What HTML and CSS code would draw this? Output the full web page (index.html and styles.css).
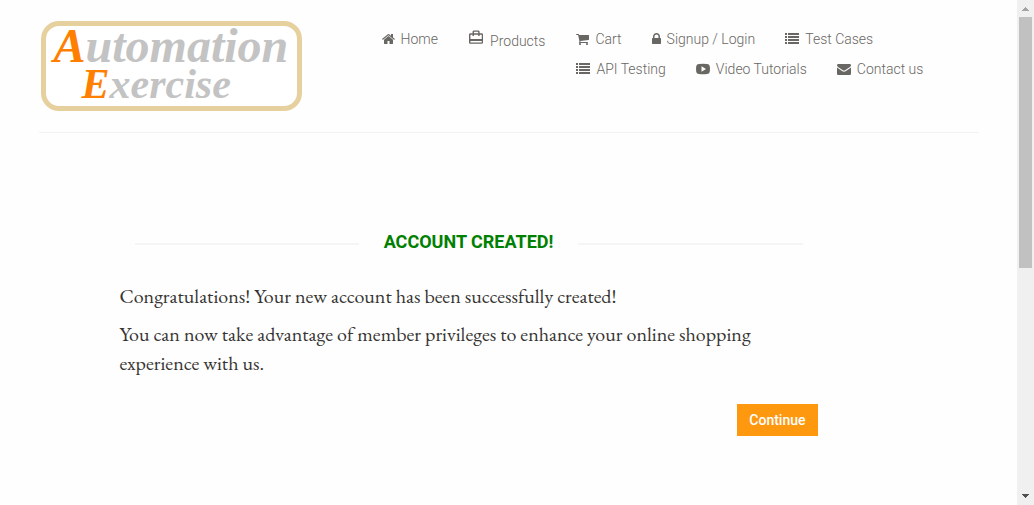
FILE: index.html
```html
<!DOCTYPE html>
<html lang="en">
<head>
<meta charset="utf-8">
<title>Automation Exercise - Account Created</title>
<link rel="stylesheet" href="styles.css">
</head>
<body>
<div class="page">
  <header class="header">
    <a class="logo" href="#" aria-label="Automation Exercise home">
      <span class="logo-line"><span class="logo-initial">A</span>utomation</span>
      <span class="logo-line logo-line-second"><span class="logo-initial">E</span>xercise</span>
    </a>
    <nav class="nav">
      <a class="nav-link" href="#"><svg class="icon" viewBox="64 0 1664 1792"><path d="M1472 992v480q0 26-19 45t-45 19h-384v-384h-256v384h-384q-26 0-45-19t-19-45v-480q0-1 .5-3t.5-3l575-474 575 474q1 2 1 6zm223-69l-62 74q-8 9-21 11h-3q-13 0-21-7l-692-577-692 577q-12 8-24 7-13-2-21-11l-62-74q-8-10-7-23.5t11-21.5l719-599q32-26 76-26t76 26l244 204v-195q0-14 9-23t23-9h192q14 0 23 9t9 23v408l219 182q10 8 11 21.5t-7 23.5z"/></svg>Home</a>
      <a class="nav-link nav-link-products" href="#"><svg class="icon-case" viewBox="2 0 20 24"><path d="M20 6h-3V4c0-1.11-.89-2-2-2H9c-1.11 0-2 .89-2 2v2H4c-1.11 0-2 .89-2 2v11c0 1.11.89 2 2 2h16c1.11 0 2-.89 2-2V8c0-1.11-.89-2-2-2zM9 4h6v2H9V4zm11 15H4v-2h16v2zm0-5H4V8h3v2h2V8h6v2h2V8h3v6z"/></svg><span>Products</span></a>
      <div class="nav-rest">
        <a class="nav-link" href="#"><svg class="icon" viewBox="64 0 1664 1792"><path d="M704 1536q0 52-38 90t-90 38-90-38-38-90 38-90 90-38 90 38 38 90zm896 0q0 52-38 90t-90 38-90-38-38-90 38-90 90-38 90 38 38 90zm128-1088v512q0 24-16.5 42.5t-40.5 21.5l-1044 122q13 60 13 70 0 16-24 64h920q26 0 45 19t19 45-19 45-45 19h-1024q-26 0-45-19t-19-45q0-11 8-31.5t16-36 21.5-40 15.5-29.5l-177-823h-204q-26 0-45-19t-19-45 19-45 45-19h256q16 0 28.5 6.5t19.5 15.5 13 24.5 8 26 5.5 29.5 4.5 26h1201q26 0 45 19t19 45z"/></svg>Cart</a>
        <a class="nav-link" href="#"><svg class="icon" viewBox="320 0 1152 1792"><path d="M640 768h512v-192q0-106-75-181t-181-75-181 75-75 181v192zm832 96v576q0 40-28 68t-68 28h-960q-40 0-68-28t-28-68v-576q0-40 28-68t68-28h32v-192q0-184 132-316t316-132 316 132 132 316v192h32q40 0 68 28t28 68z"/></svg>Signup / Login</a>
        <a class="nav-link" href="#"><svg class="icon" viewBox="0 0 14 14"><path d="M0 1h2v2H0zM3 1h11v2H3zM0 4h2v2H0zM3 4h11v2H3zM0 7h2v2H0zM3 7h11v2H3zM0 10h2v2H0zM3 10h11v2H3z"/></svg>Test Cases</a>
        <a class="nav-link" href="#"><svg class="icon" viewBox="0 0 14 14"><path d="M0 1h2v2H0zM3 1h11v2H3zM0 4h2v2H0zM3 4h11v2H3zM0 7h2v2H0zM3 7h11v2H3zM0 10h2v2H0zM3 10h11v2H3z"/></svg>API Testing</a>
        <a class="nav-link" href="#"><svg class="icon" viewBox="0 0 14 14"><path fill-rule="evenodd" d="M3 2Q7 1.6 11 2Q13.400 2.200 13.700 4Q14.200 7 13.700 10Q13.400 11.800 11 12Q7 12.400 3 12Q.6 11.800.3 10Q-.2 7 .3 4Q.6 2.200 3 2zM5.500 4.300v5.400l4.500-2.700z"/></svg>Video Tutorials</a>
        <a class="nav-link" href="#"><svg class="icon" viewBox="0 0 14 14"><path d="M14 5.500v6.200q0 1.300-1.300 1.300H1.300Q0 13 0 11.700V5.500L5 9q2 1.500 4 0zM0 3.300Q0 2 1.300 2h11.400Q14 2 14 3.200q0 1-1.100 1.800L8.500 8Q7 9 5.500 8L1 4.900Q0 4.100 0 3.300z"/></svg>Contact us</a>
      </div>
    </nav>
  </header>
  <main class="content">
    <h2 class="title">Account Created!</h2>
    <p class="message">Congratulations! Your new account has been successfully created!</p>
    <p class="message">You can now take advantage of member privileges to enhance your online shopping experience with us.</p>
    <a class="continue" href="#">Continue</a>
  </main>
</div>
<div class="scrollbar" aria-hidden="true">
  <svg class="arrow" viewBox="0 0 17 17"><path fill="#a3a3a3" d="M8 7h1v1h1v1h1v1h1v1H5v-1h1V9h1V8h1z"/></svg>
  <div class="track"><div class="thumb"></div></div>
  <svg class="arrow" viewBox="0 0 17 17"><path fill="#505050" d="M5 6h7v1h-1v1h-1v1H9v1H8V9H7V8H6V7H5z"/></svg>
</div>
</body>
</html>
```
FILE: styles.css
```css
* { box-sizing: border-box; }

body {
  margin: 0;
  height: 100vh;
  display: grid;
  grid-template-columns: 1fr 17px;
  overflow: hidden;
  background: #fefefe;
  color: #363432;
  font-family: Roboto, sans-serif;
  font-size: 14px;
}

a { color: inherit; text-decoration: none; }

.page {
  width: 100%;
  max-width: 970px;
  margin: 0 auto;
  padding: 0 15px;
}

.header {
  display: flex;
  align-items: flex-start;
  gap: 80px;
  padding: 21px 0 21px 2px;
  border-bottom: 1px solid #f3f3f3;
}

.logo {
  flex: none;
  width: 261px;
  height: 90px;
  padding: 2px 0 0 8px;
  border: 5px solid #e6d09e;
  border-radius: 18px;
  background: #fff;
  color: #c3c3c3;
  font: italic bold 48px/36px "Liberation Serif", serif;
}

.logo-line { display: block; }

.logo-line-second {
  padding-left: 28px;
  font-size: 42px;
  line-height: 40px;
}

.logo-initial { color: #ff8000; }

.nav {
  flex: 1;
  display: flex;
  align-items: flex-start;
  gap: 31px;
  padding-top: 8px;
  color: #696763;
  font-weight: 300;
  line-height: 20px;
}

.nav-rest {
  flex: 1;
  display: flex;
  flex-wrap: wrap;
  gap: 10px 30px;
}

.nav-link {
  display: flex;
  align-items: center;
  gap: 6px;
  white-space: nowrap;
}

.nav-link-products {
  align-items: flex-start;
  gap: 7px;
}

.nav-link-products span { padding-top: 2px; }

.icon { height: 14px; fill: currentColor; }
.icon-case { height: 17px; fill: currentColor; }

.content {
  width: 698px;
  max-width: 100%;
  margin-left: 81px;
  padding-top: 99px;
}

.title {
  display: flex;
  align-items: center;
  gap: 25px;
  margin: 0 15px 30px;
  color: #008000;
  font-size: 18px;
  font-weight: 700;
  line-height: 20px;
  text-transform: uppercase;
}

.title::before,
.title::after {
  content: "";
  flex: 1;
  height: 2px;
  margin-top: 4px;
  background: #f5f5f5;
}

.message {
  margin: 0 0 9px;
  font: 20px/29px "EB Garamond", Garamond, "Liberation Serif", serif;
}

.continue {
  display: block;
  width: fit-content;
  margin: 26px 0 0 auto;
  padding: 6px 12px;
  background: #fe980f;
  color: #fff;
  font-weight: 500;
  line-height: 20px;
}

.scrollbar {
  display: flex;
  flex-direction: column;
  background: #f0f0f0;
}

.arrow { flex: none; width: 17px; height: 17px; }
.track { flex: 1; padding: 0 2px; }
.thumb { height: 53.3%; background: #c1c1c1; }
```
